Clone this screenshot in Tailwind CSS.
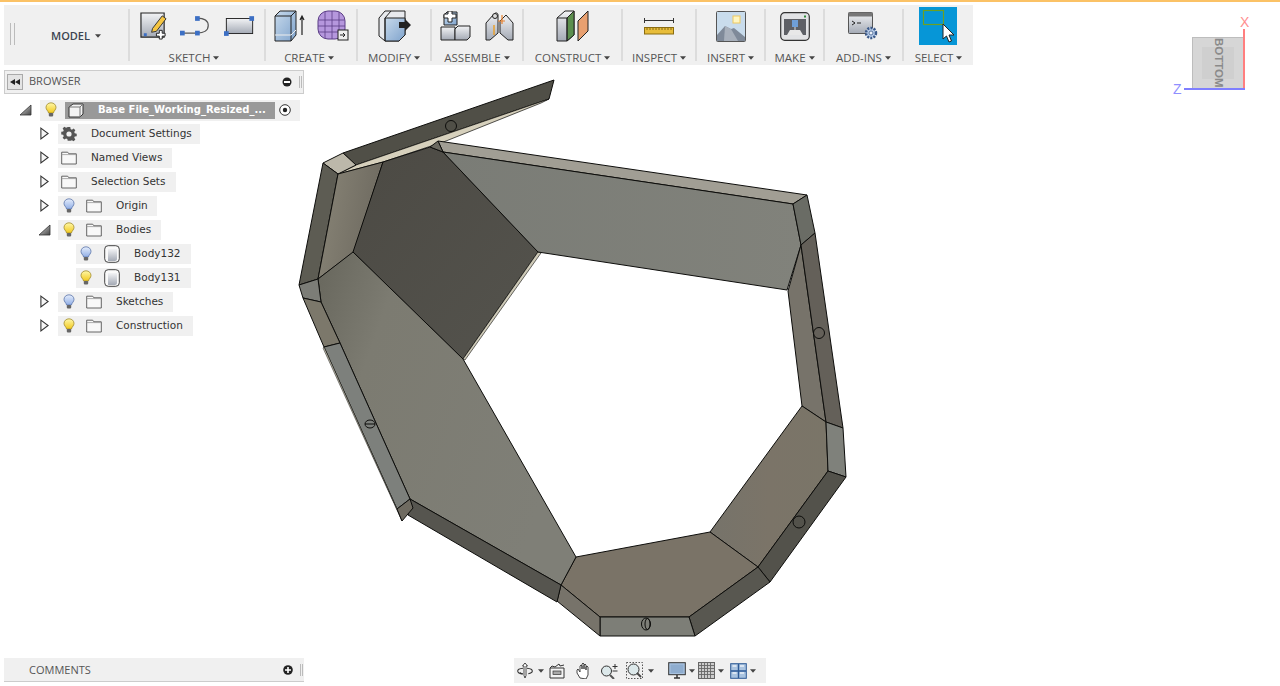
<!DOCTYPE html>
<html lang="en">
<head>
  <meta charset="UTF-8">
  <title>Fusion 360</title>
  <script src="https://cdn.jsdelivr.net/npm/@tailwindcss/browser@4"></script>
</head>
<body class="bg-white">
<div class="relative w-[1280px] h-[686px] overflow-hidden flex flex-col font-['Open_Sans',sans-serif]">

  <!-- shared svg bits -->
  <svg class="absolute w-0 h-0">
    <defs>
      <linearGradient id="gBlue" x1="0" y1="0" x2="1" y2="1"><stop offset="0" stop-color="#c8daec"/><stop offset="1" stop-color="#7fa3cc"/></linearGradient>
      <linearGradient id="gGrey" x1="0" y1="0" x2="0" y2="1"><stop offset="0" stop-color="#f2f3f5"/><stop offset="1" stop-color="#a4aab5"/></linearGradient>
      <linearGradient id="gBulbY" x1="0" y1="0" x2="0" y2="1"><stop offset="0" stop-color="#fff8a8"/><stop offset="1" stop-color="#f2c91e"/></linearGradient>
      <linearGradient id="gBulbB" x1="0" y1="0" x2="0" y2="1"><stop offset="0" stop-color="#e6eefc"/><stop offset="1" stop-color="#90aee6"/></linearGradient>
      <linearGradient id="gTri" x1="0" y1="0" x2="1" y2="1"><stop offset="0" stop-color="#ddd"/><stop offset="1" stop-color="#444"/></linearGradient>
      <linearGradient id="gBigL" x1="0" y1="0" x2="1" y2="0.45"><stop offset="0" stop-color="#67665c"/><stop offset="0.28" stop-color="#7c7b71"/><stop offset="1" stop-color="#7f7f77"/></linearGradient>
      <linearGradient id="gDark" x1="0" y1="0" x2="1" y2="1"><stop offset="0" stop-color="#4c4a44"/><stop offset="1" stop-color="#54534d"/></linearGradient>
      <linearGradient id="gRight" x1="0" y1="0" x2="1" y2="0"><stop offset="0" stop-color="#7a7c76"/><stop offset="1" stop-color="#81827b"/></linearGradient>
      <linearGradient id="gTan" x1="0" y1="0" x2="1" y2="0"><stop offset="0" stop-color="#76736a"/><stop offset="0.5" stop-color="#7b7468"/><stop offset="1" stop-color="#7a7568"/></linearGradient>
      <linearGradient id="gTanL" x1="0" y1="0" x2="1" y2="0.3"><stop offset="0" stop-color="#8a8678"/><stop offset="1" stop-color="#6e6a60"/></linearGradient>
      <symbol id="bulbY" viewBox="0 0 12 16"><path d="M6 .8C3 .8 1 3 1 5.4c0 2.3 2 3.2 2.6 5.6h4.8C9 8.6 11 7.7 11 5.4 11 3 9 .8 6 .8z" fill="url(#gBulbY)" stroke="#a08a30" stroke-width=".8"/><rect x="3.8" y="11" width="4.4" height="3.4" rx=".8" fill="#666"/></symbol>
      <symbol id="bulbB" viewBox="0 0 12 16"><path d="M6 .8C3 .8 1 3 1 5.4c0 2.3 2 3.2 2.6 5.6h4.8C9 8.6 11 7.7 11 5.4 11 3 9 .8 6 .8z" fill="url(#gBulbB)" stroke="#5a73a8" stroke-width=".8"/><rect x="3.8" y="11" width="4.4" height="3.4" rx=".8" fill="#666"/></symbol>
      <symbol id="folder" viewBox="0 0 16 14"><path d="M.7 13V1.2h6l1.2 1.6h7.4V13z" fill="#f8f8f8" stroke="#555" stroke-width=".9"/><path d="M.7 3.6h14.6" stroke="#999" stroke-width=".8"/></symbol>
      <symbol id="closed" viewBox="0 0 10 14"><path d="M1 1l8 6-8 6z" fill="#f6f6f6" stroke="#333" stroke-width="1.2"/></symbol>
      <symbol id="open" viewBox="0 0 13 12"><path d="M12 1v10H1z" fill="url(#gTri)" stroke="#333" stroke-width=".8"/></symbol>
      <symbol id="body" viewBox="0 0 16 18"><rect x=".7" y=".7" width="14.6" height="16.6" rx="3.5" fill="#fafafa" stroke="#444"/><path d="M4 4h9v10c0 1-1 2-2 2H4z" fill="url(#gGrey)"/></symbol>
      <symbol id="caret" viewBox="0 0 7 4"><path d="M0 0h7L3.500 4z" fill="#444"/></symbol>
    </defs>
  </svg>

  <!-- 3D model on the canvas -->
  <svg class="absolute inset-0" width="1280" height="686" viewBox="0 0 1280 686" stroke="#0d0d0b" stroke-width="1" stroke-linejoin="round">
    <!-- lid strip -->
    <polygon points="343,153 554,80 549,99 356,165" fill="#504f47"/>
    <polygon points="338,174 356,165 549,99 541,103 446,141 383,162" fill="#d6d0bc" stroke-width=".7"/>
    <polygon points="323,163 343,153 356,165 338,174" fill="#bcb8aa"/>
    <!-- back left -->
    <polygon points="323,163 338,174 318,279 299,285" fill="#5d5c53"/>
    <polygon points="338,174 383,162 354,252 318,279" fill="url(#gTanL)"/>
    <polygon points="383,162 430,147 443,152 538,252 463,359 353,252" fill="url(#gDark)"/>
    <polygon points="538,252 541,253 465,360 463,359" fill="#cfcbb9" stroke-width=".6"/>
    <!-- back right panel -->
    <polygon points="438,141 807,195 793,204 443,152" fill="#a19e94"/>
    <polygon points="430,147 438,141 443,152" fill="#6a685f"/>
    <polygon points="443,152 793,204 801,245 787,290 538,252" fill="url(#gRight)"/>
    <polygon points="807,195 815,233 801,245 793,204" fill="#6a6c65"/>
    <!-- right side -->
    <polygon points="801,245 826,422 802,406 788,291" fill="#77736a"/>
    <polygon points="801,245 815,233 843,428 826,422" fill="#646059"/>
    <polygon points="802,406 826,422 828,471 758,567 710,532" fill="url(#gTan)"/>
    <polygon points="826,422 843,428 846,477 828,471" fill="#7f817b"/>
    <polygon points="828,471 846,477 770,582 758,567" fill="#53524b"/>
    <!-- bottom -->
    <polygon points="576,557 710,532 758,567 689,617 600,617 561,585" fill="#7a7367"/>
    <polygon points="758,567 770,582 695,636 689,617" fill="#585750"/>
    <polygon points="600,617 689,617 695,636 600,636" fill="#7d7e77"/>
    <polygon points="561,585 600,617 600,636 557,601" fill="#77736a"/>
    <!-- left big panel -->
    <polygon points="318,279 353,252 463,359 576,557 561,585 410,499 340,343 321,302" fill="url(#gBigL)"/>
    <polygon points="410,499 561,585 557,602 408,515" fill="#56554f"/>
    <polygon points="299,285 318,279 321,302 303,298" fill="#7c7d77"/>
    <polygon points="303,298 321,302 340,343 324,347" fill="#7c786b"/>
    <polygon points="324,347 340,343 410,499 397,509" fill="#7d807c"/>
    <polygon points="323,348 324,347 397,509 402,521" fill="#cfcbb9" stroke-width=".5"/>
    <polygon points="397,509 410,499 413,508 402,521" fill="#6f6b61"/>
    <!-- pin holes -->
    <g fill="none">
      <circle cx="451" cy="126" r="5.500"/>
      <circle cx="819" cy="333" r="5.500"/>
      <circle cx="799" cy="522" r="6"/>
      <ellipse cx="646" cy="624" rx="4.500" ry="6"/><ellipse cx="647.500" cy="624" rx="2.500" ry="5.500"/>
      <ellipse cx="370" cy="424" rx="5" ry="4"/><path d="M365 424h10"/>
    </g>
  </svg>

  <!-- top accent line -->
  <div class="relative h-[2px] bg-[#fbc266] shrink-0"></div>

  <!-- toolbar -->
  <div class="relative mt-[3px] ml-1 w-[969px] h-[60px] bg-[#f0f0f0] flex shrink-0 text-[11.500px] text-[#555] leading-none">
    <div class="w-[124px] flex items-center">
      <div class="ml-[6px] w-[5px] h-[22px] border-x border-[#bbb] -mt-[2px]"></div>
      <div class="ml-[36px] mt-[1px] flex items-center gap-[5px] font-semibold text-[11px] text-[#3c4450]">MODEL <svg class="w-[6px] h-[4px]"><use href="#caret"/></svg></div>
    </div>

    <div class="w-[136px] border-l-2 border-[#dcdcdc] my-[4px] flex flex-col items-center">
      <div class="h-[36px] shrink-0 flex items-center gap-[12px] -mt-[1px]">
        <svg width="28" height="28" viewBox="0 0 29 29"><path d="M1 1h24v25H1z" fill="url(#gGrey)" stroke="#222" stroke-width="1.200"/><rect x="4" y="22" width="3" height="3" fill="#3c6fc4"/><path d="M13 17l10-13 4 3-10 13-5 1z" fill="#f5c542" stroke="#333"/><path d="M20 19h3v3h3v3h-3v3h-3v-3h-3v-3h3z" fill="#fff" stroke="#222"/></svg>
        <svg width="32" height="21" viewBox="0 0 34 22"><path d="M3 18h15c8 0 12-3 12-8s-4-8-12-8" fill="none" stroke="#555" stroke-width="1.300"/><g fill="#3c6fc4"><rect x="0" y="15.500" width="5" height="5"/><rect x="16" y="15.500" width="5" height="5"/><rect x="16" y="0" width="5" height="5"/></g></svg>
        <svg width="31" height="21" viewBox="0 0 33 22"><rect x="2.500" y="2.500" width="28" height="16" fill="url(#gGrey)" stroke="#222"/><rect x="0" y="16" width="5" height="5" fill="#3c6fc4"/><rect x="27" y="0" width="5" height="5" fill="#3c6fc4"/></svg>
      </div>
      <div class="mt-[8px] pr-[6px] flex items-center gap-[3px]">SKETCH <svg class="w-[6px] h-[4px]"><use href="#caret"/></svg></div>
    </div>

    <div class="w-[92px] border-l-2 border-[#dcdcdc] my-[4px] flex flex-col items-center">
      <div class="h-[36px] shrink-0 flex items-center gap-[12px] -mt-[1px]">
        <svg width="31" height="32" viewBox="0 0 31 32"><path d="M1 6l5-5h16v24l-5 6H1z" fill="url(#gBlue)" stroke="#222"/><path d="M1 6h16v25M17 6l5-5" fill="none" stroke="#222"/><path d="M1 25h16l5-5" fill="none" stroke="#eee"/><path d="M28 25V7M26 10l2-4 2 4" fill="none" stroke="#222" stroke-width="1.200"/></svg>
        <svg width="32" height="32" viewBox="0 0 32 32"><rect x="1" y="1" width="27" height="28" rx="10" fill="#b597dd" stroke="#5b3d86"/><path d="M1.500 10h26M1 16h27M1.500 22h26M8 2v26M15 1v28M22 2v26" stroke="#5b3d86" stroke-width=".8" fill="none"/><rect x="21" y="20" width="10" height="10" fill="#eee" stroke="#222"/><path d="M23 25h5M26 23l2 2-2 2" stroke="#222" fill="none"/></svg>
      </div>
      <div class="mt-[8px] pr-[4px] flex items-center gap-[3px]">CREATE <svg class="w-[6px] h-[4px]"><use href="#caret"/></svg></div>
    </div>

    <div class="w-[74px] border-l-2 border-[#dcdcdc] my-[4px] flex flex-col items-center">
      <div class="h-[36px] shrink-0 flex items-center -mt-[1px]">
        <svg width="33" height="32" viewBox="0 0 33 32"><path d="M1 8l6-7h20v24l-6 6H7L1 26z" fill="#e8eaee" stroke="#222"/><path d="M7 8h20v17l-6 6H7z" fill="url(#gBlue)" stroke="#222"/><path d="M7 8l6-7M7 8v23" fill="none" stroke="#222"/><path d="M21 12h6v-3l6 6-6 6v-3h-6z" fill="#222"/></svg>
      </div>
      <div class="mt-[8px] flex items-center gap-[3px]">MODIFY <svg class="w-[6px] h-[4px]"><use href="#caret"/></svg></div>
    </div>

    <div class="w-[92px] border-l-2 border-[#dcdcdc] my-[4px] flex flex-col items-center">
      <div class="h-[36px] shrink-0 flex items-center gap-[14px] -mt-[1px]">
        <svg width="31" height="30" viewBox="0 0 31 30"><path d="M4 14V4l3-3h10v13z" fill="url(#gBlue)" stroke="#222"/><path d="M1 29V16h14v13z" fill="url(#gGrey)" stroke="#222"/><path d="M15 29V18l3-3h12v11l-3 3z" fill="url(#gGrey)" stroke="#222"/><path d="M4 3h4V0h4v3h4v4h-4v4H8V7H4z" fill="#fff" stroke="#222"/></svg>
        <svg width="29" height="30" viewBox="0 0 29 30"><path d="M1 12l8-9c2-2 4-1 4 1v18l-8 7H1z" fill="url(#gGrey)" stroke="#222"/><path d="M15 10l6-6 7 8v17h-5l-8-7z" fill="url(#gGrey)" stroke="#222"/><circle cx="10" cy="5" r="2.500" fill="#ddd" stroke="#222"/><path d="M17 4v9M13 10h7" stroke="#e8812e" stroke-width="1.200"/><path d="M9 14v10" stroke="#e8a02e" stroke-width="1.500"/></svg>
      </div>
      <div class="mt-[8px] flex items-center gap-[3px]">ASSEMBLE <svg class="w-[6px] h-[4px]"><use href="#caret"/></svg></div>
    </div>

    <div class="w-[99px] border-l-2 border-[#dcdcdc] my-[4px] flex flex-col items-center">
      <div class="h-[36px] shrink-0 flex items-center -mt-[1px]">
        <svg width="33" height="32" viewBox="0 0 33 32"><path d="M1 8l8-7h9v24l-7 6H1z" fill="url(#gGrey)" stroke="#222"/><path d="M11 8l7-7v24l-7 6z" fill="#5c8f4e" stroke="#222"/><path d="M1 8h10v23" fill="none" stroke="#222"/><path d="M22 11l10-10v20L22 31z" fill="#e8a070" stroke="#222"/></svg>
      </div>
      <div class="mt-[8px] flex items-center gap-[3px]">CONSTRUCT <svg class="w-[6px] h-[4px]"><use href="#caret"/></svg></div>
    </div>

    <div class="w-[74px] border-l-2 border-[#dcdcdc] my-[4px] flex flex-col items-center">
      <div class="h-[36px] shrink-0 flex items-center -mt-[1px]">
        <svg width="30" height="18" viewBox="0 0 30 18"><path d="M.5 1v5M29.500 1v5M1 3.500h28" stroke="#333" fill="none"/><rect x=".5" y="10.500" width="29" height="6.500" fill="#e8bd3a" stroke="#8a6c10"/><path d="M3 11v2M6 11v2M9 11v2M12 11v2M15 11v2M18 11v2M21 11v2M24 11v2M27 11v2" stroke="#6a5410" stroke-width=".8"/></svg>
      </div>
      <div class="mt-[8px] flex items-center gap-[3px]">INSPECT <svg class="w-[6px] h-[4px]"><use href="#caret"/></svg></div>
    </div>

    <div class="w-[69px] border-l-2 border-[#dcdcdc] my-[4px] flex flex-col items-center">
      <div class="h-[36px] shrink-0 flex items-center -mt-[1px]">
        <svg width="30" height="31" viewBox="0 0 30 31"><rect x=".5" y=".5" width="29" height="30" rx="1" fill="#c9dcec" stroke="#555"/><rect x="17" y="5" width="7" height="7" fill="#fff6c0" stroke="#eec860"/><path d="M1 30V24l8-9 6 3 3-1 11 9v4z" fill="#7f8a99"/><path d="M9 15l6 3 7 12H8z" fill="#a8b0bb"/></svg>
      </div>
      <div class="mt-[8px] flex items-center gap-[3px]">INSERT <svg class="w-[6px] h-[4px]"><use href="#caret"/></svg></div>
    </div>

    <div class="w-[59px] border-l-2 border-[#dcdcdc] my-[4px] flex flex-col items-center">
      <div class="h-[36px] shrink-0 flex items-center -mt-[1px]">
        <svg width="30" height="29" viewBox="0 0 30 29"><rect x=".7" y=".7" width="28.600" height="27.600" rx="4" fill="#e2e3e5" stroke="#333" stroke-width="1.200"/><rect x="4" y="7" width="22" height="16" fill="#5e6066"/><rect x="12" y="8" width="6" height="7" fill="#6f9fd8"/><path d="M15 15v3" stroke="#ddd"/><path d="M7 23l3-5h10l3 5z" fill="#e8e8e8"/><rect x="24" y="3.500" width="2" height="2" fill="#2e8b3a"/></svg>
      </div>
      <div class="mt-[8px] flex items-center gap-[3px]">MAKE <svg class="w-[6px] h-[4px]"><use href="#caret"/></svg></div>
    </div>

    <div class="w-[79px] border-l-2 border-[#dcdcdc] my-[4px] flex flex-col items-center">
      <div class="h-[36px] shrink-0 flex items-center -mt-[1px]">
        <svg width="31" height="29" viewBox="0 0 31 29"><rect x=".5" y=".5" width="24" height="21" rx="1" fill="url(#gGrey)" stroke="#555"/><rect x=".5" y=".5" width="24" height="4" fill="#777"/><path d="M4 9l3 2-3 2M9 11h4" stroke="#222" fill="none"/><circle cx="23" cy="21" r="5" fill="#b8cdea" stroke="#3c5a8a" stroke-width="2.500" stroke-dasharray="2 1.200"/><circle cx="23" cy="21" r="2" fill="#eef3fa" stroke="#3c5a8a" stroke-width=".8"/></svg>
      </div>
      <div class="mt-[8px] flex items-center gap-[3px]">ADD-INS <svg class="w-[6px] h-[4px]"><use href="#caret"/></svg></div>
    </div>

    <div class="flex-1 border-l-2 border-[#dcdcdc] my-[4px] flex flex-col items-center">
      <div class="h-[38px] shrink-0 -mt-[2px] mr-[2px] w-[38px] bg-[#0696d7] relative">
        <svg class="absolute left-0 top-0" width="38" height="38" viewBox="0 0 38 38"><rect x="4.500" y="3.500" width="20" height="14" fill="none" stroke="#6ea020" stroke-width="1.200"/><path d="M24 17v15l3.500-3 2.500 6 2.500-1-2.500-6h5z" fill="#fff" stroke="#222"/></svg>
      </div>
      <div class="mt-[7px] flex items-center gap-[3px]">SELECT <svg class="w-[6px] h-[4px]"><use href="#caret"/></svg></div>
    </div>
  </div>

  <!-- browser + tree -->
  <div class="relative flex-1 ml-1 mt-[5px] w-[300px] font-['DejaVu_Sans',sans-serif] text-[10.500px] text-[#333]">
    <div class="h-[24px] bg-[#f0f0f0] border border-[#ccc] flex items-center font-['Open_Sans',sans-serif] text-[11px] text-[#555]">
      <div class="ml-[2px] w-[16px] h-[16px] border border-[#aaa] bg-[#e4e4e4] flex items-center justify-center">
        <svg width="10" height="6" viewBox="0 0 10 6"><path d="M5 0v6L0 3zM10 0v6L5 3z" fill="#222"/></svg>
      </div>
      <span class="ml-[6px] mb-[1px]">BROWSER</span>
      <svg class="ml-auto" width="10" height="10" viewBox="0 0 10 10"><circle cx="5" cy="5" r="4.500" fill="#222"/><rect x="2" y="4" width="6" height="2" fill="#fff"/></svg>
      <div class="ml-[7px] mr-[1px] w-[3px] h-[12px] border-x border-[#bbb]"></div>
    </div>

    <div class="mt-[5px] ml-[15px] mr-[4px] flex items-center h-[22px]">
      <svg class="w-[13px] h-[12px] mr-[8px] shrink-0"><use href="#open"/></svg>
      <div class="flex-1 h-[21px] bg-[#f0f0f0] flex items-center">
        <svg class="ml-[5px] w-[12px] h-[16px] shrink-0"><use href="#bulbY"/></svg>
        <div class="ml-[8px] w-[210px] h-[17px] bg-[#999] flex items-center shrink-0">
          <svg class="ml-[3px] shrink-0" width="16" height="15" viewBox="0 0 16 15"><path d="M1 14V4l4-3h10v10l-3 3z" fill="#f2f2f2" stroke="#333"/><path d="M1 4h11v10M12 4l3-3" fill="none" stroke="#777"/></svg>
          <span class="ml-[14px] mb-[1px] font-bold text-[10px] text-white whitespace-nowrap">Base File_Working_Resized_...</span>
        </div>
        <svg class="ml-[4px] shrink-0" width="12" height="12" viewBox="0 0 12 12"><circle cx="6" cy="6" r="5.300" fill="#fff" stroke="#333"/><circle cx="6" cy="6" r="2.200" fill="#222"/></svg>
      </div>
    </div>

    <div class="mt-[3px] flex flex-col gap-[4px]">
      <div class="flex items-center h-[20px] ml-[36px]">
        <svg class="w-[9px] h-[13px] mr-[9px] -mt-[1px]"><use href="#closed"/></svg>
        <div class="h-[20px] w-[142px] bg-[#f0f0f0] flex items-center">
          <svg class="ml-[3px]" width="16" height="16" viewBox="0 0 16 16"><path d="M6.500 0h3l.4 2.300 1.500.7L13.400 1.700l2 2-1.300 2 .6 1.500 2.300.4v3l-2.300.4-.6 1.500 1.300 2-2 2-2-1.300-1.500.6L9.500 16h-3l-.4-2.200-1.500-.6-2 1.300-2-2 1.300-2-.6-1.500L-1 8.500v-3l2.300-.4.600-1.500-1.300-2 2-2 2 1.300 1.500-.6z" fill="#555" transform="translate(1.100 1.100) scale(.86)"/><circle cx="8" cy="8" r="2.600" fill="#f0f0f0"/></svg>
          <span class="ml-[14px]">Document Settings</span>
        </div>
      </div>
      <div class="flex items-center h-[20px] ml-[36px]">
        <svg class="w-[9px] h-[13px] mr-[9px] -mt-[1px]"><use href="#closed"/></svg>
        <div class="h-[20px] w-[114px] bg-[#f0f0f0] flex items-center">
          <svg class="ml-[3px] w-[16px] h-[14px]"><use href="#folder"/></svg>
          <span class="ml-[14px]">Named Views</span>
        </div>
      </div>
      <div class="flex items-center h-[20px] ml-[36px]">
        <svg class="w-[9px] h-[13px] mr-[9px] -mt-[1px]"><use href="#closed"/></svg>
        <div class="h-[20px] w-[118px] bg-[#f0f0f0] flex items-center">
          <svg class="ml-[3px] w-[16px] h-[14px]"><use href="#folder"/></svg>
          <span class="ml-[14px]">Selection Sets</span>
        </div>
      </div>
      <div class="flex items-center h-[20px] ml-[36px]">
        <svg class="w-[9px] h-[13px] mr-[9px] -mt-[1px]"><use href="#closed"/></svg>
        <div class="h-[20px] w-[99px] bg-[#f0f0f0] flex items-center">
          <svg class="ml-[5px] w-[12px] h-[16px]"><use href="#bulbB"/></svg>
          <svg class="ml-[11px] w-[16px] h-[14px]"><use href="#folder"/></svg>
          <span class="ml-[14px]">Origin</span>
        </div>
      </div>
      <div class="flex items-center h-[20px] ml-[34px]">
        <svg class="w-[13px] h-[12px] mr-[7px]"><use href="#open"/></svg>
        <div class="h-[20px] w-[103px] bg-[#f0f0f0] flex items-center">
          <svg class="ml-[5px] w-[12px] h-[16px]"><use href="#bulbY"/></svg>
          <svg class="ml-[11px] w-[16px] h-[14px]"><use href="#folder"/></svg>
          <span class="ml-[14px]">Bodies</span>
        </div>
      </div>
      <div class="ml-[72px] h-[20px] w-[115px] bg-[#f0f0f0] flex items-center">
        <svg class="ml-[4px] w-[12px] h-[16px]"><use href="#bulbB"/></svg>
        <svg class="ml-[12px] w-[16px] h-[18px]"><use href="#body"/></svg>
        <span class="ml-[14px]">Body132</span>
      </div>
      <div class="ml-[72px] h-[20px] w-[115px] bg-[#f0f0f0] flex items-center">
        <svg class="ml-[4px] w-[12px] h-[16px]"><use href="#bulbY"/></svg>
        <svg class="ml-[12px] w-[16px] h-[18px]"><use href="#body"/></svg>
        <span class="ml-[14px]">Body131</span>
      </div>
      <div class="flex items-center h-[20px] ml-[36px]">
        <svg class="w-[9px] h-[13px] mr-[9px] -mt-[1px]"><use href="#closed"/></svg>
        <div class="h-[20px] w-[115px] bg-[#f0f0f0] flex items-center">
          <svg class="ml-[5px] w-[12px] h-[16px]"><use href="#bulbB"/></svg>
          <svg class="ml-[11px] w-[16px] h-[14px]"><use href="#folder"/></svg>
          <span class="ml-[14px]">Sketches</span>
        </div>
      </div>
      <div class="flex items-center h-[20px] ml-[36px]">
        <svg class="w-[9px] h-[13px] mr-[9px] -mt-[1px]"><use href="#closed"/></svg>
        <div class="h-[20px] w-[135px] bg-[#f0f0f0] flex items-center">
          <svg class="ml-[5px] w-[12px] h-[16px]"><use href="#bulbY"/></svg>
          <svg class="ml-[11px] w-[16px] h-[14px]"><use href="#folder"/></svg>
          <span class="ml-[14px]">Construction</span>
        </div>
      </div>
    </div>
  </div>

  <!-- bottom row -->
  <div class="relative flex h-[25px] ml-1 mb-[3px] shrink-0 text-[11px] text-[#555]">
    <div class="w-[300px] h-[24px] bg-[#f0f0f0] border-b border-[#ccc] flex items-center">
      <span class="ml-[25px] mt-[1px]">COMMENTS</span>
      <svg class="ml-auto" width="10" height="10" viewBox="0 0 10 10"><circle cx="5" cy="5" r="4.800" fill="#222"/><path d="M2 5h6M5 2v6" stroke="#fff" stroke-width="1.600"/></svg>
      <div class="ml-[7px] mr-[1px] w-[3px] h-[12px] border-x border-[#bbb]"></div>
    </div>
    <div class="ml-[210px] w-[252px] h-[25px] bg-[#f0f0f0] flex items-center">
      <svg class="ml-[3px]" width="16" height="17" viewBox="0 0 16 17"><path d="M8 1l2.500 3H9v9.500l-1 2.500-1-2.500V4H5.500z" fill="#fff" stroke="#333" stroke-width=".9"/><path d="M6 6.200C2.800 6.500.7 7.500.7 9c0 1.500 2.500 2.700 5.300 2.900M10 6.200c3.200.3 5.300 1.300 5.300 2.800 0 1.300-1.600 2.300-4 2.700" fill="none" stroke="#333" stroke-width="1.100"/><path d="M3.500 10l-1 2 3 .5z" fill="#333"/></svg>
      <svg class="ml-[5px] w-[6px] h-[4px]"><use href="#caret"/></svg>
      <svg class="ml-[5px]" width="16" height="16" viewBox="0 0 16 16"><path d="M1 5h14v10H1zM1 5l2-2 3 1 4-3 1 2 4-1" fill="#f4f4f4" stroke="#333"/><rect x="4" y="8" width="8" height="3.500" fill="#aaa" stroke="#333" stroke-width=".7"/></svg>
      <svg class="ml-[11px]" width="17" height="17" viewBox="0 0 17 17"><path d="M4 16l-3-5V8l1-1 2 3V4l1-1 1 1v3-5l1-1 1 1v5-4l1-1 1 1v5-3l1-1 1 1v8l-2 4z" fill="#fff" stroke="#333" stroke-width=".9"/></svg>
      <svg class="ml-[7px]" width="18" height="16" viewBox="0 0 18 16"><circle cx="6.500" cy="8" r="5" fill="#dce8ea" stroke="#333"/><path d="M10 12l4 4" stroke="#555" stroke-width="2"/><path d="M15 1v5M12.500 3.500h5M12.500 8h5" stroke="#333"/></svg>
      <svg class="ml-[8px]" width="17" height="17" viewBox="0 0 17 17"><rect x=".5" y=".5" width="16" height="16" fill="none" stroke="#555" stroke-dasharray="1.500 1.500"/><circle cx="7.500" cy="7.500" r="5.500" fill="#dce8ea" stroke="#333"/><path d="M11 11l4 4" stroke="#444" stroke-width="2"/></svg>
      <svg class="ml-[5px] w-[6px] h-[4px]"><use href="#caret"/></svg>
      <svg class="ml-[14px]" width="18" height="17" viewBox="0 0 18 17"><rect x=".7" y=".7" width="16.600" height="12" fill="#a9c3e0" stroke="#333"/><rect x="2.500" y="2.500" width="13" height="8.500" fill="#8fadcf"/><path d="M6 16h6M9 13v3" stroke="#333" stroke-width="1.500"/></svg>
      <svg class="ml-[3px] w-[6px] h-[4px]"><use href="#caret"/></svg>
      <svg class="ml-[3px]" width="17" height="17" viewBox="0 0 17 17"><rect x=".5" y=".5" width="16" height="16" fill="#ccc" stroke="#666"/><path d="M3.500 0v17M6.500 0v17M9.500 0v17M12.500 0v17M0 3.500h17M0 6.500h17M0 9.500h17M0 12.500h17" stroke="#666" stroke-width=".9"/></svg>
      <svg class="ml-[3px] w-[6px] h-[4px]"><use href="#caret"/></svg>
      <svg class="ml-[6px]" width="17" height="16" viewBox="0 0 17 16"><rect x=".7" y=".7" width="15.600" height="14.600" fill="#a9c3e0" stroke="#2d5a96"/><path d="M8.500 1v14M1 8h15" stroke="#2d5a96" stroke-width="1.400"/><path d="M2.500 3h4M10 3h4M2.500 10h4M10 10h4" stroke="#eaf1f8" stroke-width="1.500"/></svg>
      <svg class="ml-[3px] w-[6px] h-[4px]"><use href="#caret"/></svg>
    </div>
  </div>

  <!-- view cube -->
  <div class="absolute left-[1192px] top-[37px] w-[52px] h-[52px] bg-[#d6d6d6] border border-[#bdbdbd] flex items-center justify-center">
    <div class="w-[32px] h-[32px] bg-[#cfcfcf] flex items-center justify-center">
      <span class="shrink-0 whitespace-nowrap rotate-90 font-['Liberation_Sans',sans-serif] font-bold text-[11.500px] text-[#8a8a8a] leading-none">BOTTOM</span>
    </div>
  </div>
  <div class="absolute left-[1243px] top-[29px] w-[2px] h-[60px] bg-[#ff7f7f]"></div>
  <div class="absolute left-[1184px] top-[88px] w-[61px] h-[2px] bg-[#7f7fff]"></div>
  <span class="absolute left-[1240px] top-[15px] font-['Liberation_Sans',sans-serif] text-[14px] text-[#ff8f8f] leading-none">X</span>
  <span class="absolute left-[1173px] top-[82px] font-['Liberation_Sans',sans-serif] text-[14px] text-[#8f8fff] leading-none">Z</span>
</div>
</body>
</html>
